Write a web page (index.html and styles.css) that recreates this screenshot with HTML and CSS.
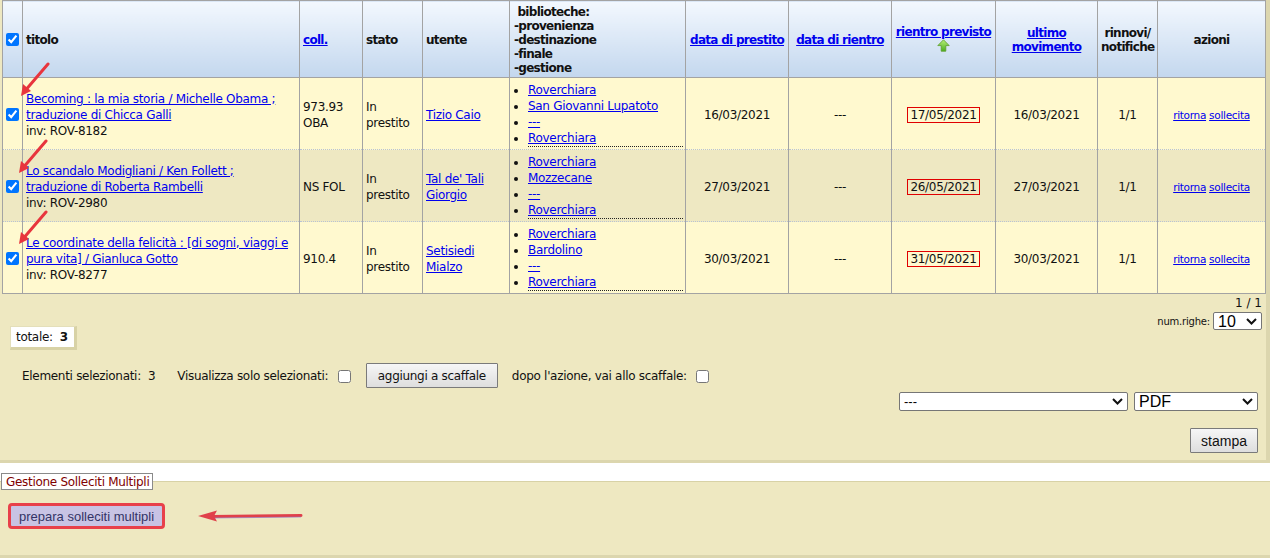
FILE: index.html
```html
<!DOCTYPE html>
<html lang="it">
<head>
<meta charset="utf-8">
<title>Prestiti</title>
<link rel="stylesheet" href="styles.css">
</head>
<body>
<div class="panel">
  <table class="grid">
    <colgroup>
      <col class="c-chk"><col class="c-tit"><col class="c-coll"><col class="c-stato"><col class="c-ute"><col class="c-bib"><col class="c-d1"><col class="c-d2"><col class="c-d3"><col class="c-d4"><col class="c-rin"><col class="c-az">
    </colgroup>
    <thead>
      <tr>
        <th class="chk"><input type="checkbox" checked></th>
        <th class="l">titolo</th>
        <th class="l"><a href="#">coll.</a></th>
        <th class="l">stato</th>
        <th class="l">utente</th>
        <th class="l bibh">&nbsp;biblioteche:<br>-provenienza<br>-destinazione<br>-finale<br>-gestione</th>
        <th><a href="#">data di prestito</a></th>
        <th><a href="#">data di rientro</a></th>
        <th><a href="#">rientro previsto</a><br><svg class="sort" width="13" height="13" viewBox="0 0 13 13"><defs><linearGradient id="g" x1="0" y1="0" x2="0" y2="1"><stop offset="0" stop-color="#b8f07a"/><stop offset="1" stop-color="#4cae1e"/></linearGradient></defs><path d="M6.5 0.8 L12.2 6.6 L8.8 6.6 L8.8 12.2 L4.2 12.2 L4.2 6.6 L0.8 6.6 Z" fill="url(#g)" stroke="#5a9a2a" stroke-width="0.8"/></svg></th>
        <th><a href="#">ultimo<br>movimento</a></th>
        <th>rinnovi/<br>notifiche</th>
        <th>azioni</th>
      </tr>
    </thead>
    <tbody>
      <tr class="odd">
        <td class="chk"><input type="checkbox" checked></td>
        <td class="l"><a href="#">Becoming : la mia storia / Michelle Obama ;<br>traduzione di Chicca Galli</a><br>inv: ROV-8182</td>
        <td class="l">973.93<br>OBA</td>
        <td class="l">In<br>prestito</td>
        <td class="l"><a href="#">Tizio Caio</a></td>
        <td class="l bib"><ul><li><a href="#">Roverchiara</a></li><li><a href="#">San Giovanni Lupatoto</a></li><li><a href="#">---</a></li><li class="last"><a href="#">Roverchiara</a></li></ul></td>
        <td>16/03/2021</td>
        <td>---</td>
        <td><span class="due">17/05/2021</span></td>
        <td>16/03/2021</td>
        <td>1/1</td>
        <td class="az"><a href="#">ritorna</a> <a href="#">sollecita</a></td>
      </tr>
      <tr class="even">
        <td class="chk"><input type="checkbox" checked></td>
        <td class="l"><a href="#">Lo scandalo Modigliani / Ken Follett ;<br>traduzione di Roberta Rambelli</a><br>inv: ROV-2980</td>
        <td class="l">NS FOL</td>
        <td class="l">In<br>prestito</td>
        <td class="l"><a href="#">Tal de' Tali<br>Giorgio</a></td>
        <td class="l bib"><ul><li><a href="#">Roverchiara</a></li><li><a href="#">Mozzecane</a></li><li><a href="#">---</a></li><li class="last"><a href="#">Roverchiara</a></li></ul></td>
        <td>27/03/2021</td>
        <td>---</td>
        <td><span class="due">26/05/2021</span></td>
        <td>27/03/2021</td>
        <td>1/1</td>
        <td class="az"><a href="#">ritorna</a> <a href="#">sollecita</a></td>
      </tr>
      <tr class="odd">
        <td class="chk"><input type="checkbox" checked></td>
        <td class="l"><a href="#">Le coordinate della felicità : [di sogni, viaggi e<br>pura vita] / Gianluca Gotto</a><br>inv: ROV-8277</td>
        <td class="l">910.4</td>
        <td class="l">In<br>prestito</td>
        <td class="l"><a href="#">Setisiedi<br>Mialzo</a></td>
        <td class="l bib"><ul><li><a href="#">Roverchiara</a></li><li><a href="#">Bardolino</a></li><li><a href="#">---</a></li><li class="last"><a href="#">Roverchiara</a></li></ul></td>
        <td>30/03/2021</td>
        <td>---</td>
        <td><span class="due">31/05/2021</span></td>
        <td>30/03/2021</td>
        <td>1/1</td>
        <td class="az"><a href="#">ritorna</a> <a href="#">sollecita</a></td>
      </tr>
    </tbody>
  </table>

  <div class="pager">
    <div class="pages">1 / 1</div>
    <div class="righe"><span class="rl">num.righe:</span>
      <span class="selwrap w48"><select class="sel"><option>10</option></select><svg class="chev" width="11" height="7" viewBox="0 0 11 7"><path d="M1 1 L5.5 5.5 L10 1" fill="none" stroke="#111" stroke-width="2"/></svg></span>
    </div>
  </div>

  <div class="totale">totale:&nbsp; <b>3</b></div>

  <div class="selrow">
    <span>Elementi selezionati:&nbsp; 3</span>
    <span class="vis">Visualizza solo selezionati: <input type="checkbox"></span>
    <button class="btn">aggiungi a scaffale</button>
    <span>dopo l'azione, vai allo scaffale: <input type="checkbox"></span>
  </div>

  <div class="printrow">
    <span class="selwrap w228"><select class="sel"><option>---</option></select><svg class="chev" width="11" height="7" viewBox="0 0 11 7"><path d="M1 1 L5.5 5.5 L10 1" fill="none" stroke="#111" stroke-width="2"/></svg></span>
    <span class="selwrap w123"><select class="sel big"><option>PDF</option></select><svg class="chev" width="11" height="7" viewBox="0 0 11 7"><path d="M1 1 L5.5 5.5 L10 1" fill="none" stroke="#111" stroke-width="2"/></svg></span>
  </div>

  <div class="stamparow"><button class="btn big">stampa</button></div>

  <svg class="arrow a1" width="40" height="40" viewBox="0 0 40 40"><path d="M30 2 L6 30" stroke="#e8353d" stroke-width="3" stroke-linecap="round"/><path d="M3 34 L5 22 L13 29 Z" fill="#e8353d"/></svg>
  <svg class="arrow a2" width="40" height="40" viewBox="0 0 40 40"><path d="M30 2 L6 30" stroke="#e8353d" stroke-width="3" stroke-linecap="round"/><path d="M3 34 L5 22 L13 29 Z" fill="#e8353d"/></svg>
  <svg class="arrow a3" width="40" height="40" viewBox="0 0 40 40"><path d="M30 2 L6 30" stroke="#e8353d" stroke-width="3" stroke-linecap="round"/><path d="M3 34 L5 22 L13 29 Z" fill="#e8353d"/></svg>
</div>

<fieldset class="fs">
  <legend>Gestione Solleciti Multipli</legend>
  <div class="fsbody">
    <button class="prep">prepara solleciti multipli</button>
    <svg class="larrow" width="108" height="14" viewBox="0 0 108 14"><path d="M104 6.5 L14 7.5" stroke="#e0404a" stroke-width="3" stroke-linecap="round"/><path d="M104 8 L14 9" stroke="#8a7ad0" stroke-width="1" opacity="0.6"/><path d="M1 7 L20 1.5 L17 7 L20 12.5 Z" fill="#e0404a"/></svg>
  </div>
</fieldset>
</body>
</html>
```

FILE: styles.css
```css
html, body {
  margin: 0;
  padding: 0;
  background: #ffffff;
  font-family: "DejaVu Sans", Verdana, sans-serif;
  font-size: 12px;
  letter-spacing: -0.3px;
  color: #111;
}

a { color: #0000ee; }

.panel {
  position: relative;
  background: #eee8c1;
  border-right: 4px solid #dcd6ae;
  border-bottom: 3px solid #dcd6ae;
  height: 460px;
  padding: 0 0 0 2px;
}

.grid {
  border-collapse: collapse;
  table-layout: fixed;
  width: 1263px;
  line-height: 16px;
}
.c-chk { width: 20px; }
.c-tit { width: 277px; }
.c-coll { width: 63px; }
.c-stato { width: 60px; }
.c-ute { width: 87px; }
.c-bib { width: 176px; }
.c-d1 { width: 103px; }
.c-d2 { width: 103px; }
.c-d3 { width: 104px; }
.c-d4 { width: 102px; }
.c-rin { width: 60px; }
.c-az { width: 108px; }

.grid th {
  background: linear-gradient(#f3f8fe, #c3d7ee);
  border: 1px solid #a3a3a3;
  font-weight: bold;
  letter-spacing: -0.7px;
  line-height: 14px;
  padding: 4px 3px 2px;
  height: 70px;
  text-align: center;
  vertical-align: middle;
}
.grid th a { color: #0000ee; }
.grid th.l { text-align: left; }
.grid th.bibh { padding-left: 4px; }

.grid td {
  border-left: 1px solid #a3a3a3;
  border-right: 1px solid #a3a3a3;
  border-bottom: 1px dotted #b9c3d3;
  padding: 4px 3px 2px;
  height: 65px;
  text-align: center;
  vertical-align: middle;
}
.grid tbody tr:last-child td { border-bottom: 1px solid #a3a3a3; }
.grid td.l { text-align: left; }
.grid .chk { padding: 0; text-align: center; }
.grid tr.odd td { background: #fff9cf; }
.grid tr.even td { background: #eee8c2; }

input[type=checkbox] {
  margin: 0;
  width: 13px;
  height: 13px;
  vertical-align: middle;
}

.sort { display: inline-block; margin-top: 0; }

.bib ul {
  margin: 0;
  padding: 0 0 0 15px;
  list-style: disc;
}
.bib li.last { border-bottom: 1px dotted #222; }
.grid td.bib { padding-right: 2px; }

.due {
  border: 1px solid #e00000;
  padding: 0 2px;
}

.az { font-size: 10.5px; }

.pager {
  float: right;
  text-align: right;
  padding-right: 4px;
  padding-top: 2px;
}
.pages { line-height: 14px; letter-spacing: 0; }
.righe { margin-top: 2px; display: flex; align-items: center; justify-content: flex-end; gap: 3px; }
.rl { font-size: 10px; letter-spacing: -0.2px; }

.selwrap {
  position: relative;
  display: inline-block;
}
.sel {
  appearance: none;
  -webkit-appearance: none;
  background: #fff;
  border: 1px solid #767676;
  border-radius: 2px;
  font-family: "Liberation Sans", Arial, sans-serif;
  font-size: 13px;
  letter-spacing: 0;
  height: 19px;
  padding: 0 4px;
  width: 100%;
  color: #000;
}
.sel.big { font-size: 16px; }
.w48 { width: 49px; }
.w48 .sel { height: 18px; font-size: 16px; }
.w228 { width: 229px; }
.w123 { width: 124px; }
.chev {
  position: absolute;
  right: 5px;
  top: 6px;
  pointer-events: none;
}

.totale {
  display: inline-block;
  margin: 32px 0 0 8px;
  background: #fff;
  padding: 3px 6px 3px 5px;
  border-right: 3px solid #d8d2a6;
  border-bottom: 3px solid #d8d2a6;
  border-top: 1px solid #e4dfba;
  border-left: 1px solid #e4dfba;
  line-height: 14px;
}

.selrow {
  display: flex;
  align-items: center;
  gap: 14px;
  margin: 13px 0 0 20px;
}
.selrow input[type=checkbox] { margin-left: 6px; }
.selrow .vis { margin-left: 8px; }
.selrow .btn { margin-left: 1px; }

.btn {
  font-family: "DejaVu Sans", Verdana, sans-serif;
  font-size: 12px;
  letter-spacing: -0.3px;
  background: linear-gradient(#f6f6f6, #dedede);
  border: 1px solid #7a7a7a;
  color: #111;
  height: 25px;
  padding: 0 11px;
  border-radius: 1px;
}
.btn.big { font-family: "Liberation Sans", Arial, sans-serif; font-size: 14px; letter-spacing: 0; padding: 0 10px; }

.printrow {
  display: flex;
  justify-content: flex-end;
  gap: 6px;
  margin: 4px 8px 0 0;
}

.stamparow {
  display: flex;
  justify-content: flex-end;
  margin: 17px 8px 0 0;
}

.arrow { position: absolute; }
.a1 { left: 18px; top: 62px; }
.a2 { left: 16px; top: 139px; }
.a3 { left: 16px; top: 210px; }

.fs {
  margin: 10px 0 0 0;
  padding: 0;
  border: 0;
  border-top: 1px solid #d8d2a6;
  border-bottom: 4px solid #dcd6ae;
  background: #eee8c1;
  position: relative;
  min-width: 0;
}
.fs legend {
  background: #fff;
  color: #800000;
  border: 1px solid #8a8a8a;
  padding: 1px 3px 0 4px;
  margin-left: 1px;
  line-height: 14px;
}
.fsbody {
  display: flex;
  align-items: center;
  padding: 14px 0 27px 8px;
  height: 24px;
}
.prep {
  font-family: "Liberation Sans", Arial, sans-serif;
  font-size: 13px;
  letter-spacing: 0;
  color: #333366;
  background: #c8c3e4;
  border: 3px solid #e8404a;
  border-radius: 4px;
  height: 26px;
  padding: 0 8px;
}
.larrow { margin-left: 32px; }
```
